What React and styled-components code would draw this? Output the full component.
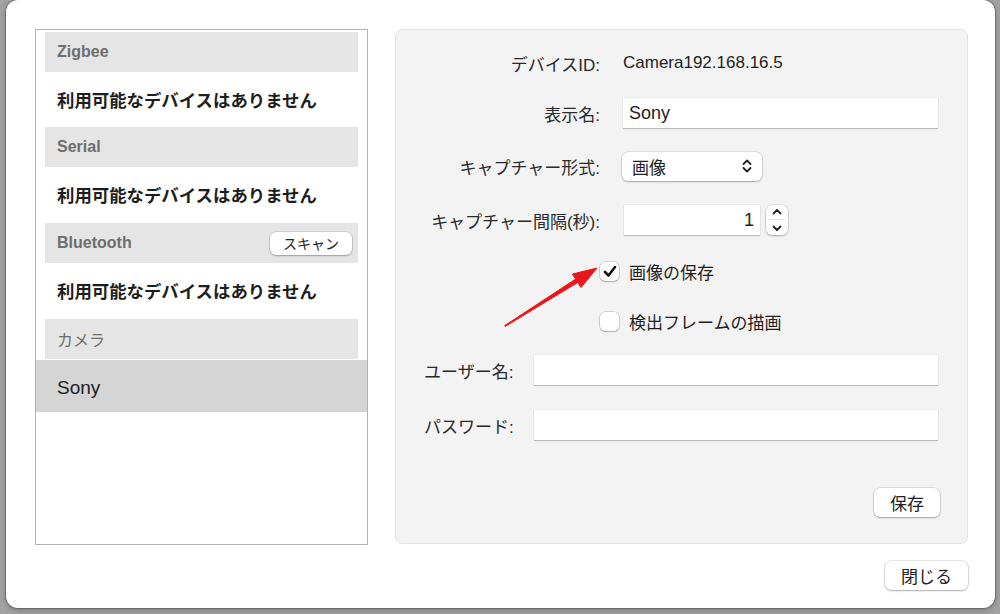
import styled, { createGlobalStyle } from 'styled-components'

const Global = createGlobalStyle`
  html, body {
    margin: 0;
    padding: 0;
    background: #a2a2a2;
    font-family: "Liberation Sans", "Noto Sans CJK JP", sans-serif;
    color: #222;
  }
`

const Desk = styled.div`
  width: 1000px;
  height: 614px;
  padding-left: 6px;
  box-sizing: border-box;
  overflow: hidden;
`

const Window = styled.div`
  width: 989px;
  height: 608px;
  background: #fff;
  border-radius: 12px;
  box-shadow: 0 0 0 1px rgba(0, 0, 0, 0.22), 0 2px 6px rgba(0, 0, 0, 0.25);
  box-sizing: border-box;
  padding: 29px 27px 0 29px;
  display: flex;
  flex-direction: column;
  position: relative;
`

const Main = styled.div`
  display: flex;
  gap: 27px;
  height: 516px;
`

const DeviceList = styled.div`
  width: 333px;
  border: 1px solid #b4b4b4;
  box-sizing: border-box;
  padding-top: 2px;
  display: flex;
  flex-direction: column;
`

const SectionHeader = styled.div`
  height: 40px;
  margin: ${(p) => (p.$gap ? '1px' : '0')} 9px 0;
  background: #e5e5e5;
  display: flex;
  align-items: center;
  justify-content: space-between;
  padding: 0 6px 0 12px;
  font-size: 16px;
  font-weight: ${(p) => (p.$plain ? 400 : 700)};
  color: #6d6d6d;
`

const EmptyRow = styled.div`
  height: 55px;
  display: flex;
  align-items: center;
  padding-left: 21px;
  font-size: 17.4px;
  font-weight: 700;
  color: #1e1e1e;
`

const DeviceRow = styled.div`
  height: 52px;
  margin-top: 1px;
  background: ${(p) => (p.$selected ? '#d5d5d5' : 'transparent')};
  display: flex;
  align-items: center;
  padding: 3px 0 0 21px;
  box-sizing: border-box;
  font-size: 19px;
  color: #1e1e1e;
`

const MacButton = styled.button`
  font-family: inherit;
  background: #fff;
  border: none;
  border-radius: 6px;
  box-shadow: 0 0 0 0.5px rgba(0, 0, 0, 0.18), 0 1px 2px rgba(0, 0, 0, 0.25);
  color: #222;
  font-size: ${(p) => p.$size || 17}px;
  width: ${(p) => p.$w}px;
  height: ${(p) => p.$h || 29}px;
  padding: 0;
  display: flex;
  align-items: center;
  justify-content: center;
`

const Panel = styled.div`
  flex: 1;
  background: #f3f3f3;
  border: 1px solid #e3e3e3;
  border-radius: 7px;
  box-sizing: border-box;
  height: 515px;
  padding: 18px 27px 0 0;
  display: flex;
  flex-direction: column;
`

const FormRow = styled.div`
  display: flex;
  align-items: center;
  height: 30px;
  margin-top: ${(p) => p.$mt || 0}px;
  margin-right: 2px;
`

const Label = styled.div`
  width: 204px;
  text-align: right;
  font-size: 17px;
  color: #2a2a2a;
  flex-shrink: 0;
`

const Value = styled.div`
  margin-left: 23px;
  font-size: 17px;
  color: #1e1e1e;
`

const TextField = styled.div`
  background: #fff;
  height: 30px;
  box-sizing: border-box;
  box-shadow: 0 1px 1px rgba(0, 0, 0, 0.2), 0 0 0 0.5px rgba(0, 0, 0, 0.06);
  display: flex;
  align-items: center;
  justify-content: ${(p) => (p.$right ? 'flex-end' : 'flex-start')};
  padding: 0 6px;
  font-size: 18px;
  color: #1e1e1e;
  margin-left: ${(p) => p.$ml || 0}px;
  width: ${(p) => (p.$w ? `${p.$w}px` : 'auto')};
  flex: ${(p) => (p.$w ? 'none' : '1')};
`

const Select = styled.div`
  margin-left: 22px;
  width: 140px;
  height: 29px;
  background: #fff;
  border-radius: 6px;
  box-shadow: 0 0 0 0.5px rgba(0, 0, 0, 0.15), 0 1px 2px rgba(0, 0, 0, 0.25);
  display: flex;
  align-items: center;
  justify-content: space-between;
  padding: 0 10px;
  box-sizing: border-box;
  font-size: 17px;
`

const Stepper = styled.div`
  margin-left: 6px;
  width: 22px;
  height: 30px;
  background: #fff;
  border-radius: 6px;
  box-shadow: 0 0 0 0.5px rgba(0, 0, 0, 0.15), 0 1px 2px rgba(0, 0, 0, 0.25);
  display: flex;
  flex-direction: column;
  align-items: center;
  justify-content: space-around;
  padding: 1px 0;
  box-sizing: border-box;
`

const StepDivider = styled.div`
  width: 16px;
  height: 1px;
  background: #e2e2e2;
`

const CheckRow = styled.label`
  display: flex;
  align-items: center;
  height: 30px;
  margin-top: ${(p) => p.$mt || 0}px;
  padding-left: 204px;
  font-size: 17px;
  color: #1e1e1e;
  gap: 10px;
`

const CheckBox = styled.span`
  width: 19px;
  height: 19px;
  box-sizing: border-box;
  border-radius: 5px;
  background: #fff;
  box-shadow: 0 0 0 0.5px rgba(0, 0, 0, 0.25), 0 1px 1.5px rgba(0, 0, 0, 0.2);
  display: flex;
  align-items: center;
  justify-content: center;
`

const CredLabel = styled.div`
  width: 110px;
  padding-left: 28px;
  font-size: 17px;
  color: #2a2a2a;
  flex-shrink: 0;
  white-space: nowrap;
`

const SaveRow = styled.div`
  margin-top: 48px;
  display: flex;
  justify-content: flex-end;
`

const Footer = styled.div`
  margin-top: 16px;
  display: flex;
  justify-content: flex-end;
`

const Arrow = styled.svg`
  position: absolute;
  left: 0;
  top: 0;
  pointer-events: none;
`

const Chevrons = () => (
  <svg width="10" height="14" viewBox="0 0 10 14" fill="none" stroke="#222" strokeWidth="1.8" strokeLinecap="round" strokeLinejoin="round">
    <path d="M1.5 5 L5 1.5 L8.5 5" />
    <path d="M1.5 9 L5 12.5 L8.5 9" />
  </svg>
)

const Up = () => (
  <svg width="10" height="7" viewBox="0 0 10 7" fill="none" stroke="#222" strokeWidth="1.8" strokeLinecap="round" strokeLinejoin="round">
    <path d="M1.5 5.5 L5 2 L8.5 5.5" />
  </svg>
)

const Down = () => (
  <svg width="10" height="7" viewBox="0 0 10 7" fill="none" stroke="#222" strokeWidth="1.8" strokeLinecap="round" strokeLinejoin="round">
    <path d="M1.5 1.5 L5 5 L8.5 1.5" />
  </svg>
)

const Tick = () => (
  <svg width="14" height="13" viewBox="0 0 14 13" fill="none" stroke="#111" strokeWidth="2.6" strokeLinecap="round" strokeLinejoin="round">
    <path d="M2 7 L5.5 10.5 L12 2" />
  </svg>
)

export default function App() {
  return (
    <>
      <Global />
      <Desk>
        <Window>
          <Main>
            <DeviceList>
              <SectionHeader>Zigbee</SectionHeader>
              <EmptyRow>利用可能なデバイスはありません</EmptyRow>
              <SectionHeader>Serial</SectionHeader>
              <EmptyRow>利用可能なデバイスはありません</EmptyRow>
              <SectionHeader $gap>
                Bluetooth
                <MacButton $w={82} $h={23} $size={14}>スキャン</MacButton>
              </SectionHeader>
              <EmptyRow>利用可能なデバイスはありません</EmptyRow>
              <SectionHeader $gap $plain>カメラ</SectionHeader>
              <DeviceRow $selected>Sony</DeviceRow>
            </DeviceList>

            <Panel>
              <FormRow>
                <Label>デバイスID:</Label>
                <Value>Camera192.168.16.5</Value>
              </FormRow>
              <FormRow $mt={20}>
                <Label>表示名:</Label>
                <TextField $ml={23}>Sony</TextField>
              </FormRow>
              <FormRow $mt={23}>
                <Label>キャプチャー形式:</Label>
                <Select>
                  画像
                  <Chevrons />
                </Select>
              </FormRow>
              <FormRow $mt={24}>
                <Label>キャプチャー間隔(秒):</Label>
                <TextField $ml={24} $w={136} $right>1</TextField>
                <Stepper>
                  <Up />
                  <StepDivider />
                  <Down />
                </Stepper>
              </FormRow>
              <CheckRow $mt={21}>
                <CheckBox><Tick /></CheckBox>
                画像の保存
              </CheckRow>
              <CheckRow $mt={20}>
                <CheckBox />
                検出フレームの描画
              </CheckRow>
              <FormRow $mt={19}>
                <CredLabel>ユーザー名:</CredLabel>
                <TextField />
              </FormRow>
              <FormRow $mt={25}>
                <CredLabel>パスワード:</CredLabel>
                <TextField />
              </FormRow>
              <SaveRow>
                <MacButton $w={66}>保存</MacButton>
              </SaveRow>
            </Panel>
          </Main>

          <Footer>
            <MacButton $w={83}>閉じる</MacButton>
          </Footer>

          <Arrow width="989" height="608" viewBox="0 0 989 608">
            <path
              d="M498.7 325.6 L569.6 279.1 L566.4 274 L591 268 L575 287.6 L571.8 282.5 L499.3 326.4 Z"
              fill="#e8161b"
              stroke="#e8161b"
              strokeWidth="1"
              strokeLinejoin="round"
            />
          </Arrow>
        </Window>
      </Desk>
    </>
  )
}
